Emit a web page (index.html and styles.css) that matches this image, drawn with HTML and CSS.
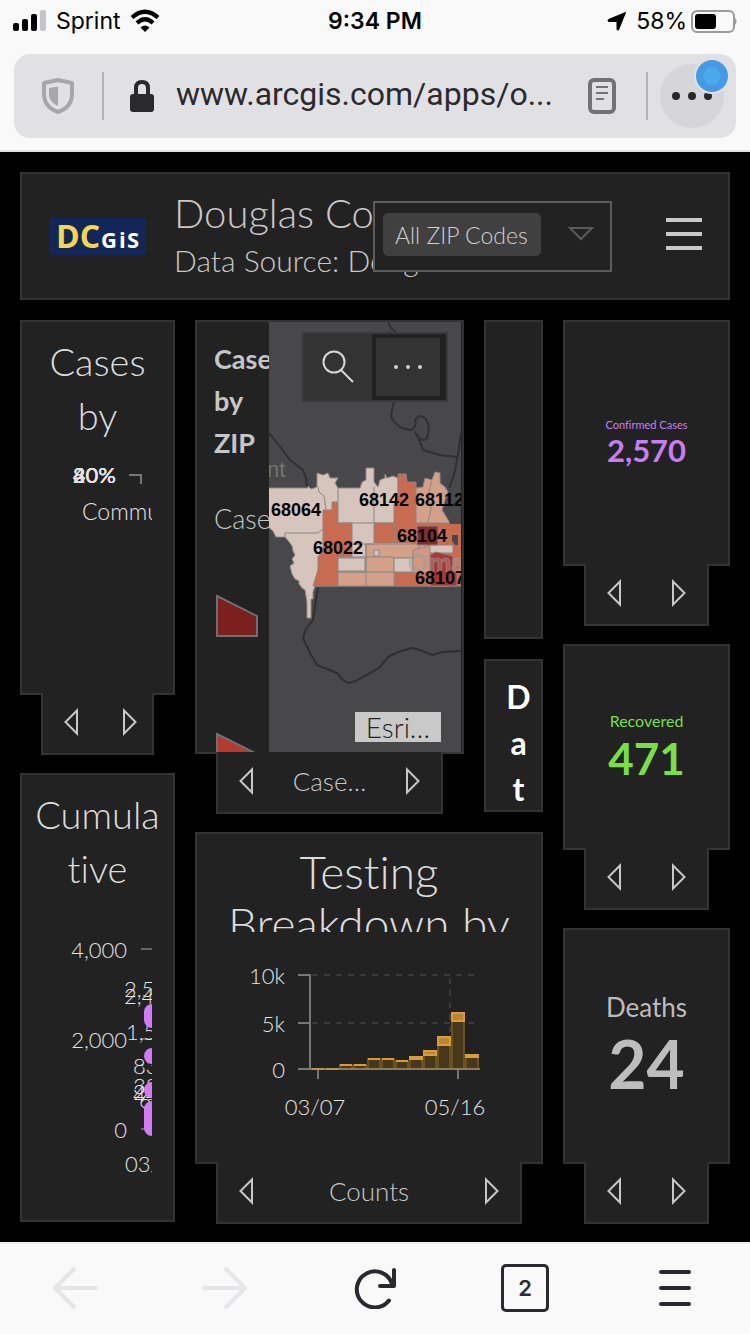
FILE: index.html
```html
<!DOCTYPE html>
<html lang="en">
<head>
<meta charset="utf-8">
<meta name="viewport" content="width=device-width, initial-scale=1">
<title>Douglas County Dashboard</title>
<link rel="stylesheet" href="styles.css">
</head>
<body>
<svg class="sprite" aria-hidden="true">
  <symbol id="prev" viewBox="0 0 14 28"><path d="M13 2.500V25.500L1.500 14Z" fill="none" stroke="currentColor" stroke-width="2"/></symbol>
  <symbol id="next" viewBox="0 0 14 28"><path d="M1 2.500V25.500L12.500 14Z" fill="none" stroke="currentColor" stroke-width="2"/></symbol>
</svg>

<div class="status">
  <div class="status-side">
    <svg width="34" height="24" viewBox="0 0 34 24" aria-hidden="true"><rect x="0" y="14" width="6" height="8" rx="2"/><rect x="9" y="10" width="6" height="12" rx="2"/><rect x="18" y="5" width="6" height="17" rx="2"/><rect x="27" y="1" width="6" height="21" rx="2" fill="#c6c6c8"/></svg>
    <span class="carrier">Sprint</span>
    <svg width="30" height="24" viewBox="0 0 30 24" aria-hidden="true"><g fill="none" stroke="#000" stroke-width="4.200"><path d="M2 8.500Q15 -3 28 8.500"/><path d="M7 14Q15 6.500 23 14"/></g><path d="M15 23L10.500 18.500Q15 14.500 19.500 18.500Z"/></svg>
  </div>
  <span class="time">9:34 PM</span>
  <div class="status-side status-right">
    <svg width="20" height="20" viewBox="0 0 20 20" aria-hidden="true"><path d="M18.500 1.500L11.500 19Q10.500 19.500 10 18.500V10.500H1.500Q.5 9.500 1.500 8.500Z" stroke="#000" stroke-linejoin="round"/></svg>
    <span class="charge">58%<svg width="46" height="24" viewBox="0 0 46 24" aria-hidden="true"><rect x="1" y="2" width="42" height="21" rx="5" fill="none" stroke="#9a9a9c" stroke-width="2"/><rect x="4" y="5" width="21" height="15" rx="3"/><path d="M44 9Q47 12 44 16Z" fill="#9a9a9c"/></svg></span>
  </div>
</div>

<div class="address-wrap">
  <div class="address">
    <button class="plain shield" aria-label="Tracking protection"><svg width="34" height="38" viewBox="0 0 34 38"><path d="M17 3L31 6V17Q31 30 17 35Q3 30 3 17V6Z" fill="none" stroke="#a7a7a9" stroke-width="4" stroke-linejoin="round"/><path d="M17 9.500V29Q8 25 8 17V11Z" fill="#a7a7a9"/></svg></button>
    <span class="divider"></span>
    <svg class="lock" width="24" height="34" viewBox="0 0 24 34" aria-hidden="true"><rect y="15" width="24" height="18" rx="3" fill="#2a2a2e"/><path d="M6 17V9Q6 3 12 3T18 9V17" fill="none" stroke="#2a2a2e" stroke-width="4"/></svg>
    <input class="url" type="text" aria-label="Address" value="www.arcgis.com/apps/o...">
    <button class="plain reader" aria-label="Reader view"><svg width="28" height="36" viewBox="0 0 28 36"><rect x="2" y="2" width="24" height="32" rx="4" fill="none" stroke="#737376" stroke-width="4"/><path d="M8 9H20M8 15H20M8 21H16" stroke="#737376" stroke-width="2"/></svg></button>
    <span class="divider"></span>
    <button class="more" aria-label="Page actions"><svg width="40" height="8" viewBox="0 0 40 8"><circle cx="4" cy="4" r="4"/><circle cx="20" cy="4" r="4"/><circle cx="36" cy="4" r="4"/></svg><span class="badge"></span></button>
  </div>
</div>

<main>
  <header class="card head">
    <svg class="logo" width="96" height="37" viewBox="0 0 96 37" role="img" aria-label="DC GIS"><rect width="96" height="37" rx="3" fill="#122757"/><text x="6" y="30" class="logo-dc">DC</text><text x="51" y="30" class="logo-gis"><tspan>G</tspan><tspan x="69">i</tspan><tspan x="77">S</tspan></text></svg>
    <div class="head-text"><h1>Douglas Co</h1><p>Data Source: Doug</p></div>
    <label class="picker"><select aria-label="ZIP code filter"><option>All ZIP Codes</option></select><svg width="28" height="16" viewBox="0 0 28 16" aria-hidden="true"><path d="M3 2H25L14 13Z" fill="none" stroke="#5a5a5a" stroke-width="2"/></svg></label>
    <button class="plain menu" aria-label="Menu"><svg width="36" height="36" viewBox="0 0 36 36"><path d="M0 2H36M0 16H36M0 30H36" stroke="currentColor" stroke-width="4"/></svg></button>
  </header>

  <div class="board">
    <div class="stack stack-left">
      <section class="widget w-cases">
        <div class="card">
          <h2 class="title">Cases<br>by</h2>
          <div class="clip">
            <svg width="220" height="120" viewBox="43 442 220 120" class="axis">
              <g class="num strong" text-anchor="end"><text x="116" y="483">20%</text><text x="116" y="483">40%</text><text x="116" y="483">80%</text></g>
              <path d="M129 475H141V484" fill="none" stroke="#777" stroke-width="2"/>
              <text x="82" y="520">Community</text>
            </svg>
          </div>
        </div>
        <nav class="tab"><button class="plain" aria-label="Previous"><svg width="14" height="28"><use href="#prev"/></svg></button><button class="plain" aria-label="Next"><svg width="14" height="28"><use href="#next"/></svg></button></nav>
      </section>
      <section class="widget w-cumulative">
        <div class="card">
          <h2 class="title">Cumula<br>tive</h2>
          <div class="clip">
            <svg width="220" height="300" viewBox="43 895 220 300" class="axis num">
              <g text-anchor="end"><text x="127" y="958">4,000</text><text x="127" y="1048">2,000</text><text x="127" y="1138">0</text></g>
              <path d="M141 949H160M141 1039H160M141 1129H160" stroke="#666" stroke-width="2"/>
              <text x="124" y="997">2,570</text><text x="124" y="1004">2,448</text><text x="126" y="1040">1,537</text><text x="133" y="1074">837</text><text x="133" y="1094">389</text><text x="133" y="1100">216</text><text x="133" y="1102">44</text><text x="139" y="1108">61</text>
              <g stroke="#d27bf5" stroke-width="16" stroke-linecap="round"><path d="M152 1012V1020M152 1056V1056.100M152 1090V1090.100M152 1109V1128"/></g>
              <text x="125" y="1172">03/07</text>
            </svg>
          </div>
        </div>
      </section>
    </div>

    <div class="stack stack-mid">
      <div class="mid-top">
        <section class="widget w-map">
          <div class="card map-card">
            <div class="legend">
              <h3>Cases by ZIP</h3>
              <p>Cases</p>
              <svg width="56" height="200" viewBox="214 590 56 200" aria-hidden="true"><g stroke="#707070" stroke-width="2"><path d="M217 596L257 616V636H217Z" fill="#7c201f"/><path d="M217 734L257 754V774H217Z" fill="#b43a2e"/></g></svg>
            </div>
            <div class="map">
              <svg class="map-art" viewBox="269 322 192 430" preserveAspectRatio="xMinYMin slice" role="img" aria-label="Map of cases by ZIP code">
                <rect x="269" y="322" width="400" height="600" fill="#48484a"/>
                <g fill="none" stroke="#303032" stroke-width="2" stroke-linejoin="round">
                  <path d="M269 433L277 443L282 449L290 460L303 470L306 478L307 487"/>
                  <path d="M388 322L391 328L396 332"/>
                  <path d="M394 402Q390 414 392 419Q399 429 410 430Q418 427 415 420Q420 413 426 419Q431 428 427 438Q421 444 415 432M417 434L423 450L440 455L457 457"/>
                  <path d="M461 433L458 455L454 475L449 488"/>
                </g>
                <path fill="none" stroke="#2f2f31" stroke-width="2" stroke-linejoin="round" d="M318 588L316 600L313 620L306 629L303 638L310 653L317 665L337 673L343 680L348 683L356 681L370 673L379 668L388 657L398 652L412 648L420 650L432 655L442 652L461 651"/>
                <text x="267" y="477" font-size="22" fill="#747476">nt</text>
                <path fill="#d5c5bd" stroke="#918986" d="M268 488H308V486L311 489L317 487V473L323 475L328 473L330 478H338L335 483L338 488H360L362 482L366 480V468H374V482L378 487L380 480L385 478V474L387 478L393 476L398 478V524H450V586H315L313 592V599H311V618H307V602L305 590L302 588L299 584V581L295 579L292 574L290 566L294 563L292 559L295 555L293 551L292 546L290 543L285 537H276L273 531L268 527Z"/>
                <g stroke="#8c8582" stroke-width="1">
                  <path fill="#c96b50" d="M332 502H338V523H352V557H338V586H313L318 570V557L323 550V510H332ZM374 523H394V543H374ZM394 523V502L398 498V474H406L407 482H416V523H462V586H394V572H412V543H394Z"/>
                  <path fill="#d3a08a" d="M416 523V488L423 487L425 478L432 480L435 472L440 473V483L445 487L448 492L445 500L442 510L450 523Z"/>
                  <path fill="#d3a08a" d="M366 544H420V558H394V586H338V572H366Z"/>
                  <path fill="#d5c5bd" d="M338 558H365V571H338ZM394 558H413V572H394ZM374 550H379V556H374ZM420 545H453V553H430L420 565Z"/>
                  <path fill="#d39881" d="M413 550L430 545V573H413Z"/>
                  <path fill="#872a2c" d="M417 526H438V545H417Z"/>
                  <path fill="#a63837" d="M430 555L436 552L453 556V570L457 574V586H430Z"/>
                  <path fill="none" d="M318 487L319 492L324 496L326 510M285 537V533H318L323 529M374 487V523M338 488V502M338 523H394M352 544H374M338 557H394M338 572H394M366 544V586M432 481L429 490L431 510L428 522M438 535H450"/>
                </g>
                <path fill="#48484a" d="M452 535H458V545H455L452 541ZM450 524H461V517L455 513L448 505L445 500Z"/>
                <text x="408" y="572" font-size="26" fill="#999" fill-opacity=".4" stroke="#a8a0a0" stroke-opacity=".5" class="city">Omaha</text>
                <g class="zip"><text x="271" y="516">68064</text><text x="359" y="506">68142</text><text x="415" y="506">68112</text><text x="397" y="542">68104</text><text x="313" y="554">68022</text><text x="415" y="584">68107</text></g>
              </svg>
              <div class="map-tools">
                <button class="plain tool" aria-label="Search"><svg width="34" height="34" viewBox="0 0 34 34"><circle cx="13" cy="12" r="10.500" fill="none" stroke="#d8d8d8" stroke-width="2"/><path d="M20 20L32 32" stroke="#d8d8d8" stroke-width="2"/></svg></button>
                <button class="plain tool tool-on" aria-label="More tools"><svg width="30" height="6" viewBox="0 0 30 6" fill="#cfcfcf"><circle cx="3" cy="3" r="2"/><circle cx="15" cy="3" r="2"/><circle cx="27" cy="3" r="2"/></svg></button>
              </div>
              <span class="credit">Esri…</span>
            </div>
          </div>
          <nav class="tab"><button class="plain" aria-label="Previous"><svg width="14" height="28"><use href="#prev"/></svg></button><span>Case…</span><button class="plain" aria-label="Next"><svg width="14" height="28"><use href="#next"/></svg></button></nav>
        </section>
        <div class="slim">
          <section class="card slim-a"></section>
          <section class="card slim-b"><h2>Dat</h2></section>
        </div>
      </div>
      <section class="widget w-testing">
        <div class="card">
          <h2 class="title title-big">Testing<br>Breakdown by</h2>
          <svg class="axis num chart" width="260" height="170" viewBox="240 954 260 170">
            <g stroke="#3a3a3a" stroke-width="2" stroke-dasharray="6 6"><path d="M312 975H480M312 1023H480M450 978V1036"/></g>
            <g stroke="#777" stroke-width="2"><path d="M298 975H310M298 1023H310M298 1069H310M310 974V1070M318 1069V1079M458 1069V1079"/></g>
            <g fill="#47381b" stroke="#6b5120" stroke-width="2"><path d="M340 1065H352V1069H340ZM354 1065H366V1069H354ZM368 1059H380V1069H368ZM382 1059H394V1069H382ZM396 1061H408V1069H396ZM410 1059H422V1069H410ZM424 1055H436V1069H424ZM438 1045H450V1069H438ZM452 1021H464V1069H452ZM466 1057H478V1069H466Z"/></g>
            <path d="M310 1069H480" stroke="#8c7a5c" stroke-width="2"/>
            <g fill="none" stroke="#d79a35" stroke-width="2"><path d="M312 1069H324M326 1069H338" stroke="#b89552"/><path d="M340 1065H352M354 1065H366M368 1059H380M382 1059H394M396 1061H408"/></g>
            <g fill="#ba8730" stroke="#d99d39" stroke-width="2"><path d="M410 1057H422V1059H410ZM424 1051H436V1055H424ZM438 1037H450V1045H438ZM452 1013H464V1021H452ZM466 1055H478V1057H466Z"/></g>
            <g text-anchor="end"><text x="285" y="984">10k</text><text x="285" y="1032">5k</text><text x="285" y="1078">0</text></g>
            <g text-anchor="middle"><text x="315" y="1115">03/07</text><text x="455" y="1115">05/16</text></g>
          </svg>
        </div>
        <nav class="tab"><button class="plain" aria-label="Previous"><svg width="14" height="28"><use href="#prev"/></svg></button><span>Counts</span><button class="plain" aria-label="Next"><svg width="14" height="28"><use href="#next"/></svg></button></nav>
      </section>
    </div>

    <div class="stack">
      <section class="widget w-confirmed">
        <div class="card stat confirmed"><span class="stat-label">Confirmed Cases</span><strong>2,570</strong></div>
        <nav class="tab"><button class="plain" aria-label="Previous"><svg width="14" height="28"><use href="#prev"/></svg></button><button class="plain" aria-label="Next"><svg width="14" height="28"><use href="#next"/></svg></button></nav>
      </section>
      <section class="widget w-recovered">
        <div class="card stat recovered"><span class="stat-label">Recovered</span><strong>471</strong></div>
        <nav class="tab"><button class="plain" aria-label="Previous"><svg width="14" height="28"><use href="#prev"/></svg></button><button class="plain" aria-label="Next"><svg width="14" height="28"><use href="#next"/></svg></button></nav>
      </section>
      <section class="widget w-deaths">
        <div class="card stat deaths"><span class="stat-label">Deaths</span><strong>24</strong></div>
        <nav class="tab"><button class="plain" aria-label="Previous"><svg width="14" height="28"><use href="#prev"/></svg></button><button class="plain" aria-label="Next"><svg width="14" height="28"><use href="#next"/></svg></button></nav>
      </section>
    </div>
  </div>
</main>

<nav class="toolbar">
  <button class="plain" aria-label="Back" disabled><svg width="46" height="42" viewBox="0 0 46 42" class="line"><path d="M22 2L3 21L22 40M3 21H44"/></svg></button>
  <button class="plain" aria-label="Forward" disabled><svg width="46" height="42" viewBox="0 0 46 42" class="line"><path d="M24 2L43 21L24 40M43 21H2"/></svg></button>
  <button class="plain" aria-label="Reload"><svg width="44" height="42" viewBox="0 0 44 42" class="line"><path d="M36 33.500A18 18 0 1 1 39 17M41 3V19H27"/></svg></button>
  <button class="plain tabs" aria-label="Open tabs">2</button>
  <button class="plain" aria-label="Browser menu"><svg width="32" height="38" viewBox="0 0 32 38" class="line"><path d="M2 3H30M2 19H30M2 35H30"/></svg></button>
</nav>
</body>
</html>
```
FILE: styles.css
```css
* { box-sizing: border-box; }

body {
  margin: 0;
  min-height: 100vh;
  display: flex;
  flex-direction: column;
  background: #f9f9fa;
  color: #dcdcdc;
  font-family: Lato, "Open Sans", sans-serif;
  font-weight: 300;
  font-variant-ligatures: none;
}

h1, h2, h3, p { margin: 0; font-weight: 300; }
svg { display: block; flex: none; }
.sprite { position: absolute; width: 0; height: 0; }

.plain {
  display: flex;
  align-items: center;
  justify-content: center;
  padding: 0;
  border: 0;
  background: none;
  color: inherit;
  font: inherit;
}

/* Phone status bar */
.status {
  display: grid;
  grid-template-columns: 1fr auto 1fr;
  align-items: center;
  height: 42px;
  padding: 0 13px;
  color: #000;
  font: 400 23px Inter, sans-serif;
}
.status-side { display: flex; align-items: center; gap: 9px; }
.status-right { justify-content: flex-end; }
.charge { display: flex; align-items: center; gap: 4px; }
.time { font-weight: 600; }

/* Address bar */
.address-wrap {
  padding: 12px 14px;
  border-bottom: 2px solid #e0e0e2;
}
.address {
  display: flex;
  align-items: center;
  height: 84px;
  padding: 0 12px 0 27px;
  border-radius: 16px;
  background: #e1e1e4;
}
.divider { width: 2px; height: 48px; background: #b3b3b6; }
.shield { margin-right: 27px; }
.lock { margin-left: 26px; }
.url {
  flex: 1;
  min-width: 0;
  margin: 0 24px 0 22px;
  padding: 0 0 4px;
  border: 0;
  background: none;
  color: #2a2a2e;
  font: 400 32px Roboto, sans-serif;
}
.reader { margin-right: 30px; }
.more {
  position: relative;
  display: flex;
  align-items: center;
  justify-content: center;
  width: 64px;
  height: 64px;
  margin-left: 12px;
  padding: 0;
  border: 0;
  border-radius: 50%;
  background: #d6d6d8;
  fill: #2a2a2e;
}
.badge {
  position: absolute;
  top: -6px;
  right: -6px;
  width: 36px;
  height: 36px;
  border: 2px solid #e1e1e4;
  border-radius: 50%;
  background: radial-gradient(circle, #4aa9ea 8px, #459ae6 9px);
}

/* Dashboard */
main {
  flex: 1;
  display: flex;
  flex-direction: column;
  gap: 20px;
  padding: 20px 20px 18px;
  background: #000;
}
.card {
  border: 2px solid #333;
  background: #222;
  overflow: hidden;
}
.head {
  display: flex;
  align-items: center;
  height: 128px;
  padding: 0 26px 0 28px;
  color: #c8c8c8;
}
.logo-dc { font: 700 32px "Open Sans", sans-serif; fill: #f2d64f; }
.logo-gis { font: 700 22px "Open Sans", sans-serif; fill: #fff; }
.head-text {
  flex: 1;
  min-width: 0;
  margin-left: 28px;
  white-space: nowrap;
}
.head-text h1 { font-size: 40px; line-height: 48px; }
.head-text p { font-size: 30px; line-height: 46px; }
.picker {
  position: relative;
  display: flex;
  justify-content: space-between;
  width: 239px;
  height: 71px;
  padding: 10px 15px 0 8px;
  border: 2px solid #5c5c5c;
  background: #222;
}
.picker select {
  height: 43px;
  padding: 2px 12px 0;
  border: 0;
  border-radius: 5px;
  appearance: none;
  background: #404040;
  color: #d0d0d0;
  font: 300 23px Lato, sans-serif;
}
.picker svg { margin-top: 13px; }
.menu { margin-left: 54px; }

.board {
  flex: 1;
  display: grid;
  grid-template-columns: 155fr 348fr 167fr;
  gap: 20px;
}
.stack {
  display: flex;
  flex-direction: column;
  gap: 18px;
  min-width: 0;
}
.stack-left { padding-bottom: 2px; }
.widget {
  display: flex;
  flex-direction: column;
  min-width: 0;
  min-height: 0;
}
.widget > .card { flex: 1; min-height: 0; }
.tab {
  position: relative;
  display: flex;
  align-items: center;
  justify-content: space-between;
  height: 62px;
  margin: -2px 21px 0;
  padding: 0 21px 2px;
  border: 2px solid #333;
  border-top: 0;
  background: #222;
  color: #c8c8c8;
  font-size: 26px;
}
.w-cases { flex: 435 1 0; }
.w-cases .tab { padding-right: 15px; }
.w-cumulative { flex: 449 1 0; }
.mid-top { flex: 494 1 0; display: flex; gap: 20px; min-height: 0; }
.w-testing { flex: 392 1 0; }
.w-map { flex: 269 1 0; }
.w-confirmed { flex: 306 1 0; }
.w-recovered { flex: 266 1 0; }
.w-deaths { flex: 296 1 0; }

.title {
  padding-top: 12px;
  font-size: 38px;
  line-height: 54px;
  text-align: center;
}
.title-big {
  height: 98px;
  font-size: 46px;
  line-height: 52px;
  overflow: hidden;
}
.clip { margin: 0 21px; overflow: hidden; }
.axis text { font: 300 23px Lato, sans-serif; fill: #e4e4e4; }
.num text { font-size: 22px; }
.strong text { font-weight: 400; }
.chart { margin: 22px 0 0 43px; }

/* Map */
.map-card { display: flex; padding-right: 1px; }
.legend { width: 72px; padding: 16px 0 0 17px; overflow: hidden; color: #c6c6c6; }
.legend h3 { width: 64px; font-size: 27px; font-weight: 700; line-height: 42px; }
.legend p { margin: 34px 0 50px; font-size: 27px; line-height: 42px; }
.map { position: relative; flex: 1; overflow: hidden; }
.map-art { position: absolute; width: 100%; height: 100%; }
.map-art text { font-family: "Liberation Sans", sans-serif; }
.zip text { font-size: 18px; font-weight: 700; fill: #000; }
.map-art .city { font-weight: 700; }
.map-tools {
  position: absolute;
  top: 10px;
  right: 13px;
  display: flex;
  border: 2px solid #3a3a3b;
  background: #333;
}
.tool { width: 68px; height: 66px; }
.tool-on { width: 74px; border: solid #222; border-width: 4px 6px 4px 4px; }
.credit {
  position: absolute;
  right: 20px;
  bottom: 10px;
  width: 86px;
  height: 30px;
  background: #c9c9c9;
  color: #222;
  font-size: 28px;
  line-height: 30px;
  text-align: center;
}

.slim { flex: 59 1 0; display: flex; flex-direction: column; gap: 20px; padding-bottom: 2px; }
.slim-a { flex: 320 1 0; }
.slim-b { flex: 152 1 0; }
.slim-b h2 {
  padding: 13px 9px 0 19px;
  color: #fff;
  font-size: 32px;
  font-weight: 700;
  line-height: 46px;
  text-align: center;
  word-break: break-all;
}

/* Indicators */
.stat {
  display: flex;
  flex-direction: column;
  align-items: center;
  justify-content: center;
}
.stat strong { font-weight: 700; }
.stat-label { font-weight: 400; }
.confirmed { color: #c77ff0; }
.confirmed .stat-label { font-size: 11px; line-height: 14px; }
.confirmed strong { font-size: 31px; line-height: 36px; }
.recovered { color: #78df45; }
.recovered .stat-label { font-size: 16px; line-height: 22px; }
.recovered strong { font-size: 44px; line-height: 52px; }
.deaths { color: #bdbdbd; }
.deaths .stat-label { font-size: 26px; line-height: 36px; }
.deaths strong { font-size: 66px; line-height: 78px; }

/* Browser toolbar */
.toolbar {
  display: grid;
  grid-template-columns: repeat(5, 1fr);
  place-items: center;
  height: 92px;
  padding-bottom: 2px;
  border-top: 2px solid #f0f0f2;
  color: #2a2a2e;
}
.toolbar button:disabled { color: #e6e6e8; }
.line {
  fill: none;
  stroke: currentColor;
  stroke-width: 4;
  stroke-linecap: round;
  stroke-linejoin: round;
}
.tabs {
  width: 48px;
  height: 48px;
  border: 3px solid #2a2a2e;
  border-radius: 5px;
  font: 600 22px Inter, sans-serif;
}
```
